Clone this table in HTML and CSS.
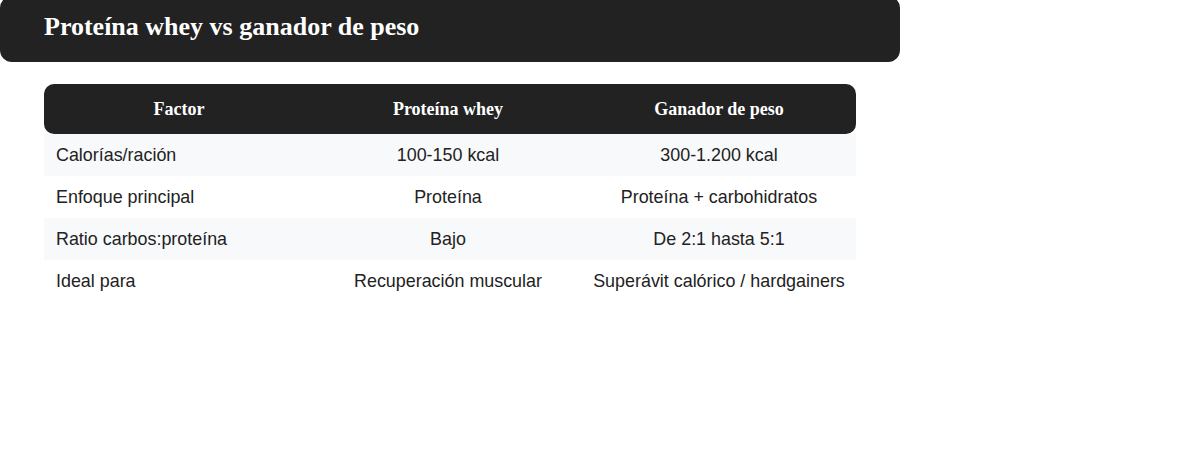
FILE: index.html
```html
<!DOCTYPE html>
<html lang="es">
<head>
<meta charset="utf-8">
<title>Proteína whey vs ganador de peso</title>
<link rel="stylesheet" href="styles.css">
</head>
<body>
<h2 class="title">Proteína whey vs ganador de peso</h2>
<table class="compare">
  <thead>
    <tr>
      <th class="c1">Factor</th>
      <th class="c2">Proteína whey</th>
      <th class="c3">Ganador de peso</th>
    </tr>
  </thead>
  <tbody>
    <tr class="alt">
      <td>Calorías/ración</td>
      <td>100-150 kcal</td>
      <td>300-1.200 kcal</td>
    </tr>
    <tr>
      <td>Enfoque principal</td>
      <td>Proteína</td>
      <td>Proteína + carbohidratos</td>
    </tr>
    <tr class="alt">
      <td>Ratio carbos:proteína</td>
      <td>Bajo</td>
      <td>De 2:1 hasta 5:1</td>
    </tr>
    <tr>
      <td>Ideal para</td>
      <td>Recuperación muscular</td>
      <td>Superávit calórico / hardgainers</td>
    </tr>
  </tbody>
</table>
</body>
</html>
```
FILE: styles.css
```css
html, body {
  margin: 0;
  padding: 0;
  background: #ffffff;
}

.title {
  box-sizing: border-box;
  width: 900px;
  height: 66px;
  margin: -4px 0 0 0;
  padding: 16px 44px 0 44px;
  background: #222222;
  color: #ffffff;
  border-radius: 12px;
  font-family: "Liberation Serif", "Times New Roman", serif;
  font-weight: bold;
  font-size: 26px;
  line-height: 30px;
}

.compare {
  margin: 22px 0 0 44px;
  width: 812px;
  border-collapse: separate;
  border-spacing: 0;
  table-layout: fixed;
  font-family: "Liberation Sans", Arial, Helvetica, sans-serif;
  font-size: 17.9px;
  color: #222222;
}

.compare th,
.compare td {
  box-sizing: border-box;
}

.compare .c1 { width: 270px; }
.compare .c2 { width: 268px; }
.compare .c3 { width: 274px; }

.compare th {
  height: 50px;
  padding: 0 6px;
  background: #222222;
  color: #ffffff;
  font-family: "Liberation Serif", "Times New Roman", serif;
  font-weight: bold;
  font-size: 18px;
  text-align: center;
  vertical-align: middle;
}

.compare th:first-child {
  border-radius: 10px 0 0 10px;
}

.compare th:last-child {
  border-radius: 0 10px 10px 0;
}

.compare td {
  height: 42px;
  padding: 0 6px;
  text-align: center;
  vertical-align: middle;
  white-space: nowrap;
}

.compare td:first-child {
  text-align: left;
  padding-left: 12px;
}

.compare tr.alt td {
  background: #f8f9fa;
}
```
